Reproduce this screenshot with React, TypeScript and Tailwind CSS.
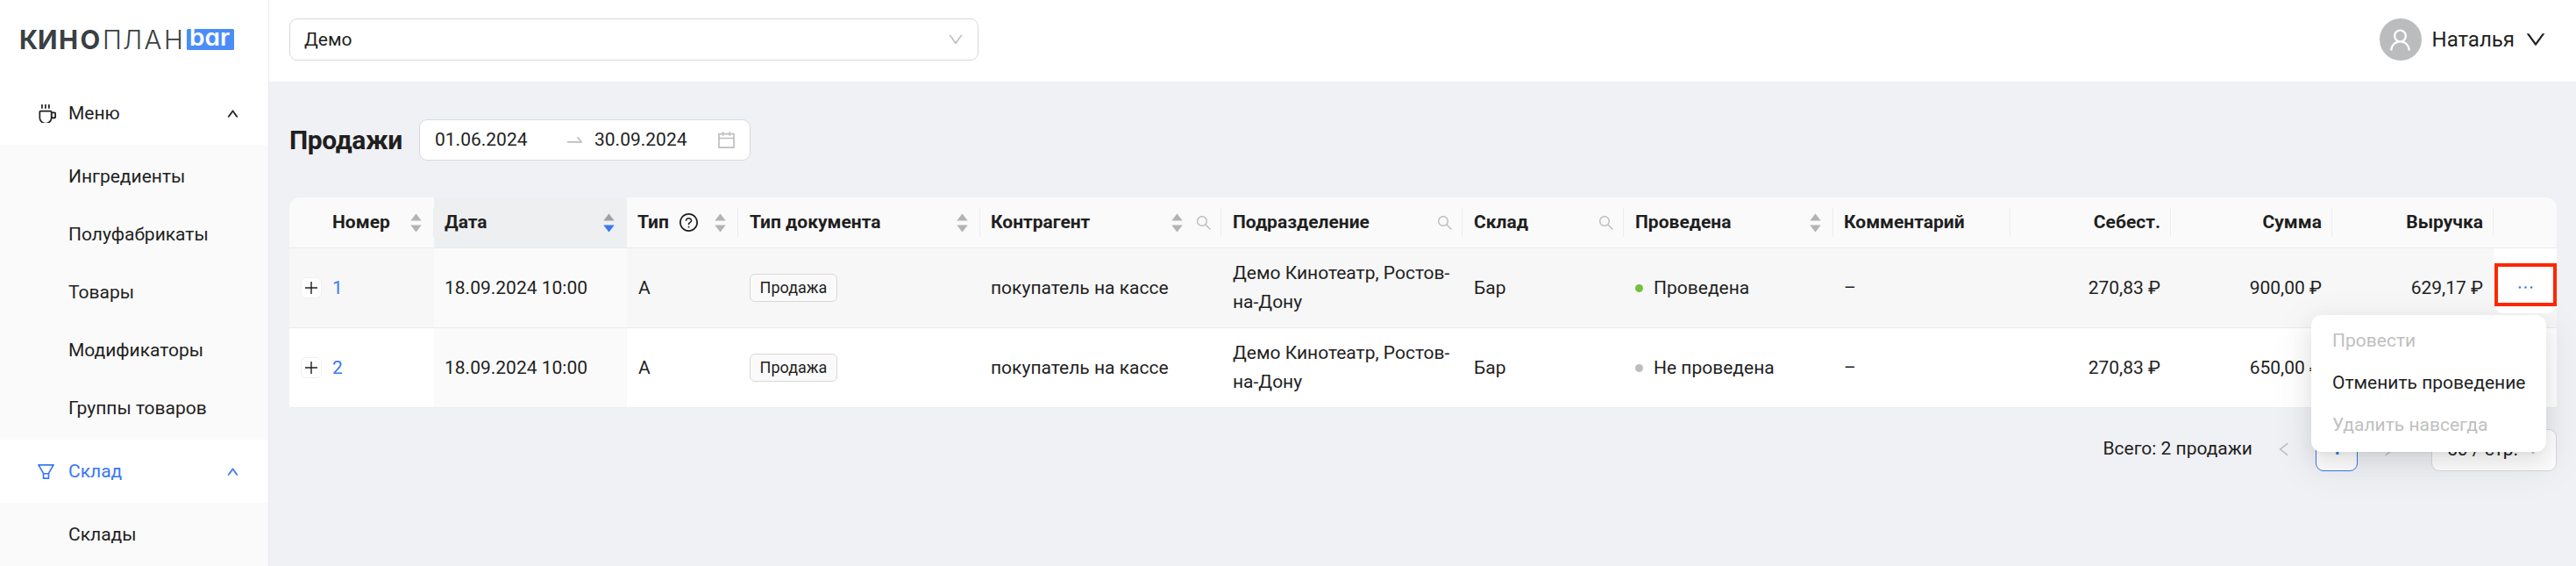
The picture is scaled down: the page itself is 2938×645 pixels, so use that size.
import type { ReactNode } from 'react'
import {
  AiOutlineCalendar,
  AiOutlineCoffee,
  AiOutlineDown,
  AiOutlineEllipsis,
  AiOutlineFilter,
  AiOutlineLeft,
  AiOutlineQuestionCircle,
  AiOutlineRight,
  AiOutlineSearch,
  AiOutlineSwapRight,
  AiOutlineUp,
  AiOutlineUser,
} from 'react-icons/ai'

const menuItems = ['Ингредиенты', 'Полуфабрикаты', 'Товары', 'Модификаторы', 'Группы товаров']

const rows = [
  { id: 1, date: '18.09.2024 10:00', posted: true, cost: '270,83 ₽', sum: '900,00 ₽', revenue: '629,17 ₽' },
  { id: 2, date: '18.09.2024 10:00', posted: false, cost: '270,83 ₽', sum: '650,00 ₽', revenue: '' },
]

const GRID =
  'grid grid-cols-[165px_220px_127px_276px_275px_275px_184px_239px_202px_183px_184px_184px_72px]'

// trims the empty margin around the ant icons
const VB = '64 64 896 896'

function Logo() {
  return (
    <svg className="block overflow-visible" width="250" height="32" viewBox="0 0 250 32">
      <g fill="#3b3f43" fontFamily="Inter, sans-serif" fontSize="29.5">
        <text x="-1 20 44 68.5" y="26.5" fontWeight="700">КИНО</text>
        <text x="94 117 141.5 164" y="26.5" fontWeight="300">ПЛАН</text>
      </g>
      <rect x="190" y="4" width="54" height="24" rx="1.5" fill="#4a8df8" />
      <text
        x="193"
        y="23.3"
        fontSize="26"
        fontWeight="600"
        fill="#fff"
        fontFamily="Inter, sans-serif"
        textLength="46"
        lengthAdjust="spacingAndGlyphs"
        className="[font-feature-settings:'cv11']"
      >
        bar
      </text>
    </svg>
  )
}

function Sorter({ desc = false }: { desc?: boolean }) {
  return (
    <svg className="block shrink-0" width="13" height="22" viewBox="0 0 13 22">
      <path d="M6.5 0.5 L12.7 8.5 H0.3 Z" fill={desc ? '#a0a1a2' : '#b2b3b4'} />
      <path d="M6.5 21.5 L12.7 13.5 H0.3 Z" fill={desc ? '#3a77f5' : '#b2b3b4'} />
    </svg>
  )
}

function HeadCell({ children, className = '', divider = true }: { children?: ReactNode; className?: string; divider?: boolean }) {
  return (
    <div className={`flex items-stretch border-b border-[#ececee] ${className}`}>
      <div className="flex flex-1 items-center pl-3">{children}</div>
      {divider && <div className="my-3 w-px bg-[#ececee]" />}
    </div>
  )
}

function Submenu({ items }: { items: string[] }) {
  return (
    <div className="flex flex-col gap-1.5 bg-[#fafafa] py-1.5">
      {items.map((item) => (
        <div key={item} className="flex h-[60px] items-center pl-[78px]">{item}</div>
      ))}
    </div>
  )
}

function Sidebar() {
  return (
    <aside className="h-full w-[307px] shrink-0 border-r border-[#ebebed] bg-[#fafafa]">
      <div className="h-[93px] bg-white pt-[29px] pl-[23px]">
        <Logo />
      </div>
      <div className="flex h-[72px] items-center bg-white pr-[33px] pl-[43px]">
        <AiOutlineCoffee viewBox={VB} className="mr-[14px] h-[21px] w-[21px]" />
        <span className="flex-1">Меню</span>
        <AiOutlineUp className="h-[15px] w-[15px]" strokeWidth={50} stroke="currentColor" />
      </div>
      <Submenu items={menuItems} />
      <div className="flex h-[72px] items-center bg-white pr-[33px] pl-[42px] text-[#3a77f5]">
        <AiOutlineFilter viewBox={VB} className="mr-[15px] h-[21px] w-[21px]" />
        <span className="flex-1">Склад</span>
        <AiOutlineUp className="h-[15px] w-[15px]" strokeWidth={50} stroke="currentColor" />
      </div>
      <Submenu items={['Склады']} />
    </aside>
  )
}

function Header() {
  return (
    <header className="flex h-[93px] items-start justify-between bg-white pt-[21px] pr-[34px] pl-[23px]">
      <div className="flex h-12 w-[786px] items-center justify-between rounded-[9px] border border-[#d9d9d9] pr-4 pl-4">
        <span>Демо</span>
        <AiOutlineDown viewBox={VB} className="h-[18px] w-[18px] text-[#bfbfbf]" />
      </div>
      <div className="flex h-12 items-center">
        <div className="flex h-12 w-12 items-center justify-center rounded-full bg-[#bbbcbd] text-white">
          <AiOutlineUser viewBox={VB} className="h-[27px] w-[27px]" />
        </div>
        <span className="ml-3 text-2xl">Наталья</span>
        <AiOutlineDown viewBox={VB} className="ml-3 h-6 w-6" />
      </div>
    </header>
  )
}

function TableHead() {
  return (
    <div className={`${GRID} h-[58px] overflow-hidden rounded-t-xl bg-[#fafafa] font-bold`}>
      <HeadCell>
        <span className="flex-1 pl-[37px]">Номер</span>
        <span className="pr-[13px]"><Sorter /></span>
      </HeadCell>
      <HeadCell className="bg-[#eeeff1]" divider={false}>
        <span className="flex-1">Дата</span>
        <span className="pr-[14px]"><Sorter desc /></span>
      </HeadCell>
      <HeadCell>
        <span>Тип</span>
        <AiOutlineQuestionCircle viewBox={VB} className="ml-3 h-[21px] w-[21px]" />
        <span className="ml-auto pr-[13px]"><Sorter /></span>
      </HeadCell>
      <HeadCell>
        <span className="flex-1 pl-px">Тип документа</span>
        <span className="pr-[13px]"><Sorter /></span>
      </HeadCell>
      <HeadCell>
        <span className="flex-1">Контрагент</span>
        <Sorter />
        <AiOutlineSearch viewBox={VB} className="mr-[10px] ml-[15px] h-[18px] w-[18px] text-[#bfbfbf]" />
      </HeadCell>
      <HeadCell>
        <span className="flex-1 pl-px">Подразделение</span>
        <AiOutlineSearch viewBox={VB} className="mr-[10px] h-[18px] w-[18px] text-[#bfbfbf]" />
      </HeadCell>
      <HeadCell>
        <span className="flex-1 pl-px">Склад</span>
        <AiOutlineSearch viewBox={VB} className="mr-[10px] h-[18px] w-[18px] text-[#bfbfbf]" />
      </HeadCell>
      <HeadCell>
        <span className="flex-1 pl-px">Проведена</span>
        <span className="pr-[13px]"><Sorter /></span>
      </HeadCell>
      <HeadCell>Комментарий</HeadCell>
      <HeadCell><span className="flex-1 pr-[11px] text-right">Себест.</span></HeadCell>
      <HeadCell><span className="flex-1 pr-[11px] text-right">Сумма</span></HeadCell>
      <HeadCell><span className="flex-1 pr-[11px] text-right">Выручка</span></HeadCell>
      <HeadCell divider={false} />
    </div>
  )
}

function TableRow({ row, active }: { row: (typeof rows)[number]; active: boolean }) {
  return (
    <div className={`${GRID} h-[91px] items-stretch border-b border-[#ececee] ${active ? 'bg-[#f7f7f7]' : 'bg-white'}`}>
      <div className="flex items-center pl-[13px]">
        <span className="flex h-6 w-6 items-center justify-center rounded-md border border-[#f0f0f0] bg-white">
          <svg width="14" height="14" viewBox="0 0 14 14" stroke="#1f1f1f" strokeWidth="1.4">
            <path d="M0 7 H14 M7 0 V14" />
          </svg>
        </span>
        <span className="ml-3 text-[#3a77f5]">{row.id}</span>
      </div>
      <div className="flex items-center bg-[#fafafa] pl-3">{row.date}</div>
      <div className="flex items-center pl-[13px]">А</div>
      <div className="flex items-center pl-[13px]">
        <span className="flex h-8 w-[100px] items-center justify-center rounded-md border border-[#d9d9d9] bg-[#fafafa] text-lg">Продажа</span>
      </div>
      <div className="flex items-center pl-3">покупатель на кассе</div>
      <div className="flex items-center pl-[13px] leading-[33px]">
        <span>Демо Кинотеатр, Ростов-<br />на-Дону</span>
      </div>
      <div className="flex items-center pl-[13px]">Бар</div>
      <div className="flex items-center pl-[13px]">
        <span className={`mr-3 h-[9px] w-[9px] rounded-full ${row.posted ? 'bg-[#72c040]' : 'bg-[#bcbdbf]'}`} />
        {row.posted ? 'Проведена' : 'Не проведена'}
      </div>
      <div className="flex items-center pl-3">–</div>
      <div className="flex items-center justify-end pr-3">{row.cost}</div>
      <div className="flex items-center justify-end pr-3">{row.sum}</div>
      <div className="flex items-center justify-end pr-3">{row.revenue}</div>
      {active ? (
        <div className="relative z-10 h-[74px] rounded-b-xl bg-white pt-[17px]">
          <button className="ml-px flex h-[49px] w-[71px] items-center justify-center border-4 border-[#ff2600] pt-[6px] text-[#3a77f5]">
            <AiOutlineEllipsis viewBox={VB} className="h-[21px] w-[21px]" />
          </button>
        </div>
      ) : (
        <div />
      )}
    </div>
  )
}

function ActionsMenu() {
  return (
    <div className="absolute top-[134px] right-3 w-[268px] rounded-xl bg-white px-1.5 pt-[5px] pb-[7px] shadow-[0_9px_24px_0_rgba(0,0,0,0.08),0_4px_9px_-6px_rgba(0,0,0,0.12),0_14px_42px_12px_rgba(0,0,0,0.05)]">
      <div className="flex h-12 items-center pl-[18px] text-[#bfbfbf]">Провести</div>
      <div className="flex h-12 items-center pl-[18px] whitespace-nowrap">Отменить проведение</div>
      <div className="flex h-12 items-center pl-[18px] text-[#bfbfbf]">Удалить навсегда</div>
    </div>
  )
}

function Pagination() {
  return (
    <div className="mt-6 flex h-12 items-center justify-end">
      <span className="mr-3 pb-[3px]">Всего: 2 продажи</span>
      <span className="flex h-12 w-12 items-center justify-center pb-[3px] text-[#bfbfbf]">
        <AiOutlineLeft viewBox={VB} className="h-[18px] w-[18px]" />
      </span>
      <span className="ml-3 flex h-12 w-12 items-center justify-center rounded-[9px] border border-[#3a77f5] bg-white pb-[3px] font-bold text-[#3a77f5]">1</span>
      <span className="ml-3 flex h-12 w-12 items-center justify-center pb-[3px] text-[#bfbfbf]">
        <AiOutlineRight viewBox={VB} className="h-[18px] w-[18px]" />
      </span>
      <span className="ml-6 flex h-12 w-[143px] items-center justify-between rounded-[9px] border border-[#d9d9d9] bg-white px-[17px] pb-[2px]">
        50 / стр.
        <AiOutlineDown viewBox={VB} className="h-[18px] w-[18px] text-[#bfbfbf]" />
      </span>
    </div>
  )
}

export default function App() {
  return (
    <div className="flex h-[645px] w-[2938px] overflow-hidden bg-[#f0f1f5] font-['Roboto',sans-serif] text-[21px] leading-[33px] text-[#1f1f1f]">
      <Sidebar />
      <div className="flex-1">
        <Header />
        <main className="pr-[22px] pl-[23px]">
          <div className="flex h-[132px] items-center pt-px">
            <h1 className="w-[148px] text-[30px] font-bold tracking-[-0.4px]">Продажи</h1>
            <div className="flex h-[47px] w-[378px] items-center rounded-[9px] border border-[#d9d9d9] bg-white pb-px pl-[17px]">
              <span className="w-[149px]">01.06.2024</span>
              <AiOutlineSwapRight viewBox={VB} className="mr-[12px] h-[21px] w-[21px] text-[#bfbfbf]" />
              <span className="w-[140px]">30.09.2024</span>
              <AiOutlineCalendar viewBox={VB} className="h-[21px] w-[21px] text-[#bfbfbf]" />
            </div>
          </div>
          <div className="relative">
            <TableHead />
            {rows.map((row) => (
              <TableRow key={row.id} row={row} active={row.id === 1} />
            ))}
            <Pagination />
            <ActionsMenu />
          </div>
        </main>
      </div>
    </div>
  )
}
